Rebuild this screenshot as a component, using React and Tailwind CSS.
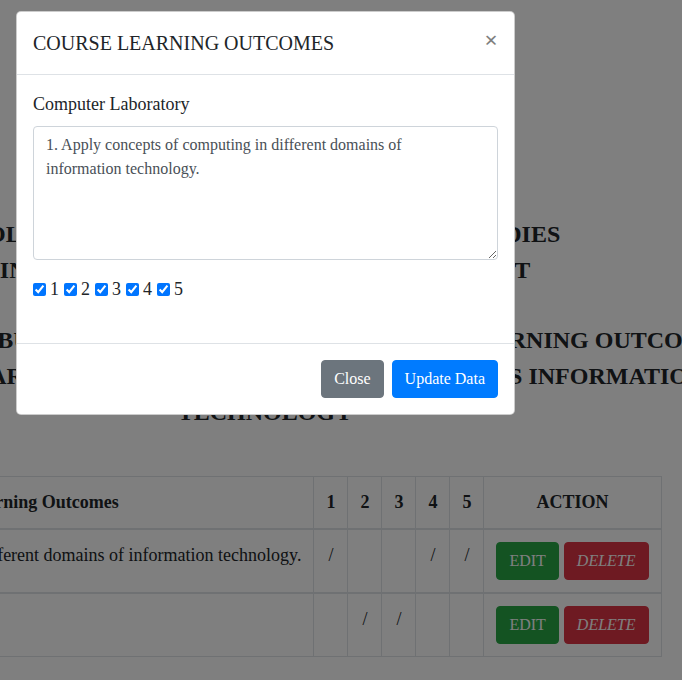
import React from "react";

function HeadLine({ children }) {
  return (
    <div className="flex justify-center whitespace-nowrap">
      <span>{children}</span>
    </div>
  );
}

const rows = [
  {
    text: "1. Apply concepts of computing in different domains of information technology.",
    marks: [true, false, false, true, true],
  },
  {
    text: "2. Design solutions.",
    marks: [false, true, true, false, false],
  },
];

export default function App() {
  return (
    <div className="relative w-[682px] h-[680px] overflow-hidden bg-white text-[#212529] font-[family-name:'Liberation_Serif','Times_New_Roman',serif]">
      {/* Background page */}
      <div className="w-[530px] pt-[216px] text-[24px] leading-[36px] font-bold">
        <HeadLine>COLLEGE OF BUSINESS AND COMPUTER STUDIES</HeadLine>
        <HeadLine>INFORMATION TECHNOLOGY DEPARTMENT</HeadLine>
        <div className="mt-[34px]">
          <HeadLine>COURSE CONTRIBUTION TO THE PROGRAM INTENDED LEARNING OUTCOMES</HeadLine>
          <HeadLine>FOR EACH YEAR LEVEL IN THE CURRICULUM FOR THE BS INFORMATION</HeadLine>
          <HeadLine>TECHNOLOGY</HeadLine>
        </div>
      </div>

      <div className="mt-[46px] -ml-[289px] w-max">
        <table className="border-collapse text-[18px] leading-[27px]">
          <thead>
            <tr className="border-b-2 border-[#dee2e6]">
              <th className="border border-[#dee2e6] border-b-2 px-3 py-3 text-center font-bold">Course Learning Outcomes</th>
              {[1, 2, 3, 4, 5].map((n) => (
                <th key={n} className="border border-[#dee2e6] border-b-2 px-3 py-3 text-center font-bold">{n}</th>
              ))}
              <th className="border border-[#dee2e6] border-b-2 px-3 py-3 text-center font-bold">ACTION</th>
            </tr>
          </thead>
          <tbody>
            {rows.map((r, i) => (
              <tr key={i}>
                <td className={`border border-[#dee2e6] ${i === 0 ? "border-b-2" : ""} px-3 py-3 align-top whitespace-nowrap text-left`}>{r.text}</td>
                {r.marks.map((m, j) => (
                  <td key={j} className={`border border-[#dee2e6] ${i === 0 ? "border-b-2" : ""} px-3 py-3 align-top text-center`}>{m ? "/" : ""}</td>
                ))}
                <td className={`border border-[#dee2e6] ${i === 0 ? "border-b-2" : ""} px-3 py-3 align-top`}>
                  <div className="flex justify-center gap-[5px] text-[16px] leading-[24px]">
                    <span className="rounded-[4px] border border-[#28a745] bg-[#28a745] px-3 py-1.5 text-white">EDIT</span>
                    <span className="rounded-[4px] border border-[#dc3545] bg-[#dc3545] px-3 py-1.5 text-white italic">DELETE</span>
                  </div>
                </td>
              </tr>
            ))}
          </tbody>
        </table>
      </div>

      {/* Backdrop */}
      <div className="absolute inset-0 bg-black/50" />

      {/* Modal */}
      <div className="absolute left-[16px] top-[11px] w-[499px] rounded-[5px] border border-black/20 bg-white">
        <div className="flex items-start justify-between border-b border-[#dee2e6] p-4">
          <h5 className="text-[20px] leading-[30px] font-medium">COURSE LEARNING OUTCOMES</h5>
          <button className="text-[24px] leading-none font-bold text-black opacity-50">×</button>
        </div>
        <div className="p-4">
          <label className="block text-[18px] leading-[27px] mb-2">Computer Laboratory</label>
          <textarea
            className="block w-full h-[134px] rounded-[4px] border border-[#ced4da] pl-3 pr-[24px] py-1.5 text-[16px] leading-[24px] text-[#495057] outline-none"
            defaultValue="1. Apply concepts of computing in different domains of information technology."
          />
          <div className="mt-4 mb-6 flex items-center text-[18px] leading-[27px]">
            {[1, 2, 3, 4, 5].map((n) => (
              <span key={n} className="flex items-center mr-[5px]">
                <input type="checkbox" defaultChecked className="m-0 h-[13px] w-[13px]" />
                <span className="ml-[4px]">{n}</span>
              </span>
            ))}
          </div>
        </div>
        <div className="flex justify-end gap-2 border-t border-[#dee2e6] p-4 text-[16px] leading-[24px]">
          <button className="rounded-[4px] border border-[#6c757d] bg-[#6c757d] px-3 py-1.5 text-white">Close</button>
          <button className="rounded-[4px] border border-[#007bff] bg-[#007bff] px-3 py-1.5 text-white">Update Data</button>
        </div>
      </div>
    </div>
  );
}
